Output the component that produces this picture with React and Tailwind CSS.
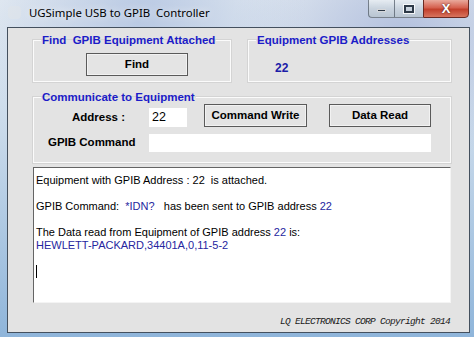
import React from 'react';

const ui = { fontFamily: '"Liberation Sans", Arial, sans-serif' };

const GroupBox = ({ title, className, children }) => (
  <fieldset className={`border border-[#fbfbfb] shadow-[0_0_0_1px_#d4d4d4] ${className}`} style={ui}>
    <legend className="ml-[7px] px-px text-[11.5px] leading-[14px] font-bold text-[#1c1cc8] whitespace-pre">
      {title}
    </legend>
    {children}
  </fieldset>
);

const WinButton = ({ label, className }) => (
  <button
    className={`h-[23px] border border-[#5a5a5a] bg-[#e4e4e4] shadow-[inset_0_0_0_1px_#f2f2f2] text-[11.5px] font-bold text-black ${className}`}
    style={ui}
  >
    {label}
  </button>
);

const CaptionButtons = () => (
  <div className="flex items-start h-[19px] mr-[5px] -mt-px">
    <div className="w-[27px] h-[19px] border border-[#4b5563]/70 rounded-bl-[4px] bg-[linear-gradient(180deg,#e6ecf2_0%,#c9d3de_50%,#b9c5d2_100%)] flex items-center justify-center">
      <div className="w-[9px] h-[3px] bg-[#2d3947] border border-white/80 mt-[4px]" />
    </div>
    <div className="w-[28px] h-[19px] border-y border-[#4b5563]/70 bg-[linear-gradient(180deg,#e6ecf2_0%,#c9d3de_50%,#b9c5d2_100%)] flex items-center justify-center">
      <div className="w-[10px] h-[8px] border-2 border-[#2d3947] shadow-[0_0_0_1px_rgba(255,255,255,0.8)]" />
    </div>
    <div className="w-[46px] h-[19px] border border-[#6b2a22] rounded-br-[4px] bg-[linear-gradient(180deg,#e9a99c_0%,#d5614f_45%,#c2402c_55%,#d8745e_100%)] flex items-center justify-center">
      <span className="text-white text-[13px] font-bold leading-none [text-shadow:0_0_2px_#3a1a14]" style={ui}>
        X
      </span>
    </div>
  </div>
);

export default function App() {
  return (
    <div className="w-[474px] h-[337px] overflow-hidden flex flex-col bg-[radial-gradient(ellipse_at_30%_5%,#b9c9e3_0%,transparent_35%),radial-gradient(ellipse_at_85%_10%,#b4c1de_0%,transparent_30%),linear-gradient(180deg,#e4ebf2_0%,#c8d9ea_40%,#8fb5da_100%)]">
      {/* title bar */}
      <div className="h-[27px] flex items-start">
        <div className="w-[13px] h-[13px] mt-[6px] ml-[8px] rounded-sm bg-[#dfe4ea]/60" />
        <div
          className="ml-[8px] mt-[4px] text-[11.4px] leading-[17px] text-black whitespace-pre [text-shadow:0_0_8px_#ffffff]"
          style={{ fontFamily: '"Noto Sans", "Open Sans", sans-serif' }}
        >
          UGSimple USB to GPIB  Controller
        </div>
        <div className="flex-1" />
        <CaptionButtons />
      </div>

      {/* client area */}
      <div className="ml-[7px] w-[463px] h-[306px] border border-[#44505e] bg-[#e3e3e3] pl-[25px] pr-[17px] flex flex-col">
        <div className="flex mt-[5px] gap-[17px]">
          <GroupBox title="Find  GPIB Equipment Attached" className="w-[198px] h-[49px]">
            <WinButton label="Find" className="ml-[52px] mt-[6px] w-[102px]" />
          </GroupBox>
          <GroupBox title="Equipment GPIB Addresses" className="w-[203px] h-[49px]">
            <div className="ml-[26px] mt-[12px] text-[12px] font-bold text-[#1c1ca8]" style={ui}>
              22
            </div>
          </GroupBox>
        </div>

        <GroupBox title="Communicate to Equipment" className="mt-[8px] w-[418px] h-[73px]">
          <div className="flex items-end h-[23px]">
            <div className="ml-[38px] w-[77px] text-[11.5px] leading-[19px] font-bold text-black">Address :</div>
            <div className="w-[38px] h-[19px] bg-white pl-[3px] text-[12.5px] leading-[19px] text-black">22</div>
            <WinButton label="Command Write" className="ml-[17px] w-[103px]" />
            <WinButton label="Data Read" className="ml-[22px] w-[102px]" />
          </div>
          <div className="flex items-center mt-[7px] h-[18px]">
            <div className="ml-[14px] w-[101px] text-[11.5px] font-bold text-black">GPIB Command</div>
            <div className="w-[282px] h-[18px] bg-white" />
          </div>
        </GroupBox>

        <div
          className="mt-[4px] w-[418px] h-[136px] bg-white border-t border-l border-[#646464] border-r border-b border-r-[#f4f4f4] border-b-[#f4f4f4] pl-[2px] pt-[6px] text-[11px] leading-[13px] text-black whitespace-pre"
          style={ui}
        >
          <div>Equipment with GPIB Address : 22  is attached.</div>
          <div>&nbsp;</div>
          <div>
            GPIB Command:  <span className="text-[#2626a0]">*IDN?</span>   has been sent to GPIB address{' '}
            <span className="text-[#2626a0]">22</span>
          </div>
          <div>&nbsp;</div>
          <div>
            The Data read from Equipment of GPIB address <span className="text-[#2626a0]">22</span> is:
          </div>
          <div className="text-[#2626a0]">HEWLETT-PACKARD,34401A,0,11-5-2</div>
          <div>&nbsp;</div>
          <div className="h-[13px] flex items-center">
            <div className="w-px h-[13px] bg-black" />
          </div>
        </div>

        <div className="mt-[14px] w-[418px] flex justify-end">
          <span
            className="text-[9.5px] leading-[10px] italic tracking-[-0.7px] text-[#1a1a1a] pr-px"
            style={{ fontFamily: '"Liberation Mono", "DejaVu Sans Mono", monospace' }}
          >
            LQ ELECTRONICS CORP Copyright 2014
          </span>
        </div>
      </div>
    </div>
  );
}
